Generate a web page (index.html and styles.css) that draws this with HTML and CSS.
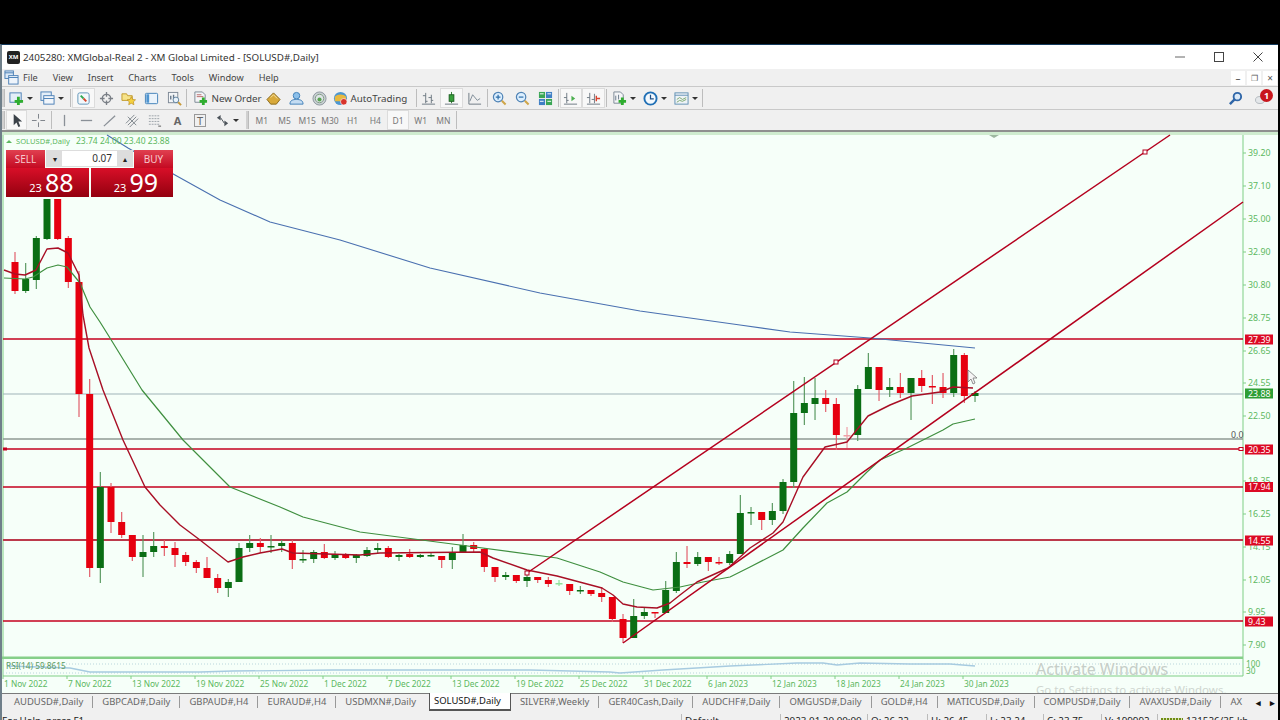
FILE: index.html
```html
<!DOCTYPE html>
<html lang="en">
<head>
  <meta charset="UTF-8">
  <title>2405280: XMGlobal-Real 2 - XM Global Limited - [SOLUSD#,Daily]</title>
  <link rel="stylesheet" href="styles.css">
</head>
<body>

<div class="window">

  <header class="titlebar">
    <span class="app-logo">XM</span>
    <span class="title-text">2405280: XMGlobal-Real 2 - XM Global Limited - [SOLUSD#,Daily]</span>
    <div class="win-buttons">
      <svg viewBox="0 0 12 12"><path d="M1 6h10" stroke="#666" fill="none"/></svg>
      <svg viewBox="0 0 12 12"><rect x="1.5" y="1.5" width="9" height="9" stroke="#444" fill="none"/></svg>
      <svg viewBox="0 0 12 12"><path d="M1.5 1.5l9 9M10.5 1.5l-9 9" stroke="#444" fill="none"/></svg>
    </div>
  </header>

  <nav class="menubar">
    <svg class="ic menu-icon" viewBox="0 0 16 16"><rect x="1" y="1" width="9" height="8" fill="#dbe8f6" stroke="#4a7fb5"/><rect x="5" y="6" width="10" height="9" fill="#eef4fb" stroke="#4a7fb5"/><path d="M1 3h9M5 8h10" stroke="#4a7fb5"/></svg>
    <a>File</a><a>View</a><a>Insert</a><a>Charts</a><a>Tools</a><a>Window</a><a>Help</a>
    <div class="mdi-buttons">
      <span>&#8211;</span><span class="restore">&#10064;</span><span>&#215;</span>
    </div>
  </nav>

  <div class="toolbar">
    <i class="grip"></i>
    <div class="tool w30">
      <svg class="ic" viewBox="0 0 16 16"><rect x="1" y="2" width="12" height="10" fill="#e4eef8" stroke="#4a7fb5"/><path d="M10 6v9M6 11h9" stroke="#2fae2f" stroke-width="3"/></svg><b class="caret"></b>
    </div>
    <div class="tool w33">
      <svg class="ic" viewBox="0 0 16 16"><rect x="1" y="1" width="11" height="9" fill="#e4eef8" stroke="#4a7fb5"/><rect x="4" y="5" width="11" height="9" fill="#f2f6fb" stroke="#4a7fb5"/><path d="M4 8h11" stroke="#4a7fb5"/></svg><b class="caret"></b>
    </div>
    <i class="sep"></i>
    <div class="tool boxed">
      <svg class="ic" viewBox="0 0 16 16"><rect x="2" y="2" width="12" height="12" rx="2" fill="#f2f8fb" stroke="#5f93b8"/><path d="M5 5l3 3" stroke="#2fa84f" stroke-width="2"/><path d="M8 8l3 3" stroke="#d6452b" stroke-width="2"/></svg>
    </div>
    <div class="tool">
      <svg class="ic" viewBox="0 0 16 16"><circle cx="8" cy="8" r="4.5" fill="none" stroke="#7a7f86" stroke-width="1.4"/><path d="M8 1v5M8 10v5M1 8h5M10 8h5" stroke="#7a7f86" stroke-width="1.4"/></svg>
    </div>
    <div class="tool">
      <svg class="ic" viewBox="0 0 16 16"><path d="M1 3h5l1 2h5v5H1z" fill="#f6e38a" stroke="#c19a2e"/><path d="M11 6l1.4 3 3.1.4-2.3 2.1.6 3.1-2.8-1.5-2.8 1.5.6-3.1-2.3-2.1 3.1-.4z" fill="#f4d03f" stroke="#b98a1e" stroke-width=".7"/></svg>
    </div>
    <div class="tool">
      <svg class="ic" viewBox="0 0 16 16"><rect x="1.5" y="2.5" width="13" height="11" rx="1" fill="#eaf3fb" stroke="#3f7fb8"/><rect x="2.5" y="3.5" width="3" height="9" fill="#4f95d0"/></svg>
    </div>
    <div class="tool">
      <svg class="ic" viewBox="0 0 16 16"><rect x="1.5" y="1.5" width="10" height="11" fill="#f3f5f7" stroke="#7b8794"/><path d="M4 9V5M7 9V4" stroke="#66788a" stroke-width="1.5"/><circle cx="9.5" cy="9.5" r="3" fill="#e8f2fa" stroke="#5d7f9c"/><path d="M12 12l3 3" stroke="#c79a3a" stroke-width="2"/></svg>
    </div>
    <i class="sep"></i>
    <div class="tool labeled w74">
      <svg class="ic" viewBox="0 0 16 16"><path d="M2 1h8l3 3v8H2z" fill="#f4f5f7" stroke="#7b8794"/><path d="M4 4h5M4 6h7" stroke="#a44" stroke-width=".8"/><path d="M11 7v8M7 11h8" stroke="#2fae2f" stroke-width="3"/></svg>
      <span>New Order</span>
    </div>
    <div class="tool">
      <svg class="ic" viewBox="0 0 16 16"><path d="M1 9l7-7 7 7-4 5H5z" fill="#d8a93a" stroke="#8a6a1d"/><path d="M5 7l3-3 4 4" fill="none" stroke="#f6e3a4"/></svg>
    </div>
    <div class="tool">
      <svg class="ic" viewBox="0 0 16 16"><circle cx="8" cy="5" r="3.5" fill="#8cc0ea" stroke="#3f7fb8"/><path d="M1 14c0-4 3-5 7-5s7 1 7 5z" fill="#c4dcf2" stroke="#3f7fb8"/></svg>
    </div>
    <div class="tool">
      <svg class="ic" viewBox="0 0 16 16"><circle cx="8" cy="8" r="7" fill="#c9cfd3" stroke="#8d979e"/><circle cx="8" cy="8" r="4.5" fill="#dfe5e8" stroke="#7d9a80"/><circle cx="8" cy="9" r="2.2" fill="#57a34f"/></svg>
    </div>
    <div class="tool labeled w84">
      <svg class="ic" viewBox="0 0 16 16"><circle cx="8" cy="8" r="7" fill="#4d97d1"/><path d="M2 6c3-3 9-3 12 0v5H2z" fill="#e8b93e"/><circle cx="11.5" cy="11.5" r="3.5" fill="#d8332b" stroke="#fff" stroke-width=".7"/></svg>
      <span>AutoTrading</span>
    </div>
    <i class="sep"></i>
    <div class="tool">
      <svg class="ic" viewBox="0 0 16 16"><path d="M5 2v11M2 5h3M5 11h2M11 4v9M8 7h3M11 10h2M1 14h14" stroke="#6b7680" fill="none"/></svg>
    </div>
    <div class="tool boxed">
      <svg class="ic" viewBox="0 0 16 16"><path d="M1 14h14" stroke="#6b7680"/><path d="M8 1v12" stroke="#2e7d32"/><rect x="5.5" y="4" width="5" height="7" fill="#36a03a" stroke="#1b5e20"/></svg>
    </div>
    <div class="tool">
      <svg class="ic" viewBox="0 0 16 16"><path d="M2 2v12h13" stroke="#6b7680" fill="none"/><path d="M3 11l3-7 5 6 3-2" stroke="#7c8a95" fill="none"/></svg>
    </div>
    <i class="sep"></i>
    <div class="tool">
      <svg class="ic" viewBox="0 0 16 16"><circle cx="6.5" cy="6.5" r="5" fill="#dcefff" stroke="#4f83b5" stroke-width="1.3"/><path d="M4 6.5h5M6.5 4v5" stroke="#2f6fa8" stroke-width="1.3"/><path d="M10.5 10.5l4 4" stroke="#cfa64a" stroke-width="2.2"/></svg>
    </div>
    <div class="tool">
      <svg class="ic" viewBox="0 0 16 16"><circle cx="6.5" cy="6.5" r="5" fill="#dcefff" stroke="#4f83b5" stroke-width="1.3"/><path d="M4 6.5h5" stroke="#2f6fa8" stroke-width="1.3"/><path d="M10.5 10.5l4 4" stroke="#cfa64a" stroke-width="2.2"/></svg>
    </div>
    <div class="tool">
      <svg class="ic" viewBox="0 0 16 16"><rect x="1" y="1" width="6.5" height="6.5" fill="#3aa655"/><rect x="8.5" y="1" width="6.5" height="6.5" fill="#3f7fc4"/><rect x="1" y="8.5" width="6.5" height="6.5" fill="#3f7fc4"/><rect x="8.5" y="8.5" width="6.5" height="6.5" fill="#3aa655"/><path d="M2 3h4M10 3h4M2 11h4M10 11h4" stroke="#fff"/></svg>
    </div>
    <i class="sep"></i>
    <div class="tool boxed">
      <svg class="ic" viewBox="0 0 16 16"><path d="M4 2v11M1 14h14M1 7h3M4 10h2" stroke="#6b7680" fill="none"/><path d="M9 5l4 3-4 3z" fill="#4caf50"/></svg>
    </div>
    <div class="tool boxed">
      <svg class="ic" viewBox="0 0 16 16"><path d="M4 2v11M9 3v10M1 14h14M1 7h3M6 9h3" stroke="#6b7680" fill="none"/><path d="M11 5v6M11 8h4" stroke="#d9432f" stroke-width="1.5"/></svg>
    </div>
    <i class="sep"></i>
    <div class="tool w31">
      <svg class="ic" viewBox="0 0 16 16"><path d="M2 1h7l3 3v9H2z" fill="#f4f5f7" stroke="#7b8794"/><path d="M4 5v5M7 4v5" stroke="#66788a"/><path d="M11 7v8M7 11h8" stroke="#2fae2f" stroke-width="3"/></svg><b class="caret"></b>
    </div>
    <div class="tool w31">
      <svg class="ic" viewBox="0 0 16 16"><circle cx="8" cy="8" r="6.5" fill="#f2f8fd" stroke="#1f6fb5" stroke-width="2"/><path d="M8 4v4.5h3.5" stroke="#1f4f85" fill="none" stroke-width="1.3"/></svg><b class="caret"></b>
    </div>
    <div class="tool w31">
      <svg class="ic" viewBox="0 0 16 16"><rect x="1" y="2" width="14" height="12" fill="#eef3f7" stroke="#5f8fb3"/><path d="M1 4.5h14" stroke="#5f8fb3"/><path d="M3 9l3-2 3 2 4-2M3 12l3-2 3 1 4-2" stroke="#7aa86d" fill="none"/></svg><b class="caret"></b>
    </div>
    <i class="sep"></i>
    <div class="toolbar-end">
      <svg class="ic" viewBox="0 0 16 16"><circle cx="10" cy="6" r="4" fill="#dbe9f7" stroke="#2f66a8" stroke-width="2"/><path d="M7 9l-5 5" stroke="#2f66a8" stroke-width="2.6"/></svg>
      <span class="alert-icon"><svg viewBox="0 0 18 16"><ellipse cx="5" cy="10" rx="4.5" ry="3.5" fill="#e4e7ea" stroke="#b5bbc0"/></svg><b>1</b></span>
    </div>
  </div>

  <div class="toolbar second">
    <i class="grip"></i>
    <div class="tool boxed narrow">
      <svg class="ic" viewBox="0 0 16 16"><path d="M5 1v12l3-3 2 5 2-1-2-5h4z" fill="#3b4249"/></svg>
    </div>
    <div class="tool">
      <svg class="ic" viewBox="0 0 16 16"><path d="M8 1v5M8 10v5M1 8h5M10 8h5" stroke="#7a7f86"/></svg>
    </div>
    <i class="sep"></i>
    <div class="tool"><svg class="ic" viewBox="0 0 16 16"><path d="M8 2v12" stroke="#8a9097" stroke-width="1.4"/></svg></div>
    <div class="tool"><svg class="ic" viewBox="0 0 16 16"><path d="M2 8h12" stroke="#8a9097" stroke-width="1.4"/></svg></div>
    <div class="tool"><svg class="ic" viewBox="0 0 16 16"><path d="M2 14L14 3" stroke="#8a9097" stroke-width="1.4"/></svg></div>
    <div class="tool"><svg class="ic" viewBox="0 0 16 16"><path d="M1 11L10 2M3 13l9-9M5 15l9-9M3 4l9 9" stroke="#7d848b"/></svg></div>
    <div class="tool"><svg class="ic" viewBox="0 0 16 16"><path d="M2 3h12M2 6h12M2 9h12M2 12h12" stroke="#9aa1a8" stroke-dasharray="2 1"/><path d="M12 14h3" stroke="#555"/></svg></div>
    <div class="tool"><span class="glyph">A</span></div>
    <div class="tool"><span class="glyph boxed-t">T</span></div>
    <div class="tool w31"><svg class="ic" viewBox="0 0 16 16"><path d="M2 5l4-3v6zM14 11l-4 3V8z" fill="#4b5259"/><path d="M6 5l4 6" stroke="#4b5259"/></svg><b class="caret"></b></div>
    <i class="grip gap"></i>
    <div class="tool period">M1</div>
    <div class="tool period">M5</div>
    <div class="tool period">M15</div>
    <div class="tool period">M30</div>
    <div class="tool period">H1</div>
    <div class="tool period">H4</div>
    <div class="tool period boxed">D1</div>
    <div class="tool period">W1</div>
    <div class="tool period">MN</div>
    <i class="sep"></i>
  </div>

  <main class="chart">
    <svg id="chartSvg" class="chart-svg" width="1276" height="561" viewBox="0 132 1276 561"></svg>

    <div class="trade-panel">
      <div class="trade-top">
        <span class="trade-btn">SELL</span>
        <div class="lots">
          <span class="spin">&#9662;</span>
          <span class="lots-value">0.07</span>
          <span class="spin">&#9652;</span>
        </div>
        <span class="trade-btn">BUY</span>
      </div>
      <div class="trade-prices">
        <div class="price"><small>23</small>88</div>
        <div class="price"><small>23</small>99</div>
      </div>
    </div>
  </main>

  <div class="tabs">
    <a>AUDUSD#,Daily</a>
    <a>GBPCAD#,Daily</a>
    <a>GBPAUD#,H4</a>
    <a>EURAUD#,H4</a>
    <a class="before-active">USDMXN#,Daily</a>
    <a class="active">SOLUSD#,Daily</a>
    <a>SILVER#,Weekly</a>
    <a>GER40Cash,Daily</a>
    <a>AUDCHF#,Daily</a>
    <a>OMGUSD#,Daily</a>
    <a>GOLD#,H4</a>
    <a>MATICUSD#,Daily</a>
    <a>COMPUSD#,Daily</a>
    <a>AVAXUSD#,Daily</a>
    <a class="cut">AX</a>
    <span class="tab-arrows"><b>&#9666;</b><b>&#9656;</b></span>
  </div>

  <footer class="status">
    <span>For Help, press F1</span>
    <span>Default</span>
    <span>2023.01.20 00:00</span>
    <span>O: 26.22</span>
    <span>H: 26.45</span>
    <span>L: 23.24</span>
    <span>C: 23.75</span>
    <span>V: 199992</span>
    <span class="conn"><i class="conn-bars"></i>131526/35 kb</span>
  </footer>

</div>

<script src="chart.js"></script>
</body>
</html>
```

FILE: styles.css
```css
:root {
  --panel: #f0f0f0;
  --text-main: #444;
  --chart-bg: #f6fff9;
}

html, body {
  margin: 0;
  height: 720px;
  overflow: hidden;
  background: #000;
}

body {
  font-family: 'Noto Sans', sans-serif;
  color: var(--text-main);
}

.window {
  margin: 44px 2px 0 0;
  border-top: 1px solid #12395c;
  border-left: 2px solid #6f7f8a;
  background: var(--panel);
  height: 675px;
  overflow: hidden;
}

.titlebar {
  height: 24px;
  background: #fff;
  display: flex;
  align-items: center;
  padding-left: 5px;
  color: #333;
  font-size: 9.8px;
}

.app-logo {
  width: 13px;
  height: 13px;
  border-radius: 2px;
  background: #222;
  color: #fff;
  font-size: 6px;
  font-weight: bold;
  line-height: 13px;
  text-align: center;
  margin-right: 3px;
}

.win-buttons {
  margin-left: auto;
  display: flex;
  gap: 27px;
  padding-right: 14px;
}

.win-buttons svg { width: 12px; height: 12px; }

.menubar {
  height: 17px;
  display: flex;
  align-items: center;
  font-size: 9.2px;
}

.menu-icon { margin: 0 4px 0 2px; }
.menubar a { margin-right: 15px; }

.mdi-buttons {
  margin-left: auto;
  display: flex;
  gap: 2px;
  padding-right: 1px;
}

.mdi-buttons span {
  width: 14px;
  height: 14px;
  background: #fff;
  color: #555;
  text-align: center;
  font-size: 10px;
  line-height: 14px;
}

.mdi-buttons .restore { font-size: 8px; }

.toolbar {
  height: 22px;
  display: flex;
  align-items: center;
  border-top: 1px solid #c9c9c9;
  font-size: 9.8px;
}

.toolbar.second {
  height: 20px;
  border-bottom: 2px solid #8f8f8f;
}

.grip {
  width: 2px;
  height: 18px;
  margin: 0 1px 0 0;
  background: #d0d0d0;
  border-right: 1px solid #bbb;
}

.second .grip.gap { margin: 0 2px 0 3px; }

.sep {
  width: 1px;
  height: 18px;
  margin: 0 1px;
  background: #bdbdbd;
  flex: none;
}

.tool {
  width: 22.7px;
  height: 20px;
  flex: none;
  display: flex;
  align-items: center;
  justify-content: center;
  box-sizing: border-box;
  gap: 3px;
}

.tool.w30 { width: 30px; }
.tool.w31 { width: 31px; }
.tool.w33 { width: 33px; padding-right: 2px; }
.tool.w74 { width: 74px; justify-content: flex-start; padding-left: 5px; }
.tool.w84 { width: 84px; justify-content: flex-start; padding-left: 2px; }
.tool.boxed { background: #f8f8f8; border: 1px solid #dcdcdc; }
.tool.narrow { width: 21px; }

.ic { width: 15px; height: 15px; flex: none; }

.caret {
  width: 0;
  height: 0;
  border-left: 3px solid transparent;
  border-right: 3px solid transparent;
  border-top: 3px solid #333;
}

.labeled span { white-space: nowrap; color: #444; }

.glyph { font-weight: bold; color: #666; font-size: 11px; }
.boxed-t { border: 1px solid #999; padding: 0 2px; line-height: 11px; font-weight: normal; }

.period { font-size: 8.5px; color: #777; }

.toolbar-end {
  margin-left: auto;
  display: flex;
  align-items: center;
  gap: 12px;
  padding-right: 5px;
}

.alert-icon {
  width: 18px;
  height: 16px;
  position: relative;
  display: block;
}

.alert-icon svg { width: 18px; height: 16px; }

.alert-icon b {
  position: absolute;
  right: 0;
  top: -1px;
  width: 13px;
  height: 13px;
  border-radius: 50%;
  background: #c8161d;
  color: #fff;
  font-size: 9px;
  line-height: 13px;
  text-align: center;
}

.chart {
  height: 561px;
  position: relative;
  overflow: hidden;
  background: var(--chart-bg);
}

.chart-svg { display: block; font-family: 'Noto Sans', sans-serif; }

.trade-panel {
  position: absolute;
  left: 4px;
  top: 18px;
  width: 167px;
  color: #fff;
}

.trade-top {
  display: flex;
  height: 18px;
  font-size: 10px;
}

.trade-btn {
  width: 39px;
  background: linear-gradient(#e04050, #c40a22);
  color: #f7c9cd;
  text-align: center;
  line-height: 18px;
  flex: none;
}

.lots {
  flex: 1;
  display: flex;
  align-items: stretch;
  background: #ddd;
  color: #333;
  padding: 1px;
  margin: 0 1px;
  box-sizing: border-box;
  height: 17px;
}

.spin {
  width: 15px;
  text-align: center;
  font-size: 8px;
  line-height: 15px;
  color: #222;
}

.lots-value {
  flex: 1;
  background: #fff;
  text-align: right;
  padding-right: 5px;
  line-height: 15px;
}

.trade-prices {
  display: flex;
  gap: 2px;
}

.price {
  flex: 1;
  height: 29px;
  background: linear-gradient(#d80f28, #93000f);
  font-size: 25px;
  line-height: 29px;
  text-align: right;
  padding-right: 15px;
}

.price small {
  font-size: 11px;
  margin-right: 3px;
}

.tabs {
  height: 17px;
  display: flex;
  align-items: center;
  background: var(--panel);
  border-top: 1px solid #7a7a7a;
  box-sizing: border-box;
  font-size: 9.45px;
  color: #666;
  padding-left: 3px;
  position: relative;
}

.tabs a {
  padding: 0 9px;
  border-right: 1px solid #999;
  line-height: 12px;
  white-space: nowrap;
}

.tabs .before-active { border-right: 0; padding-right: 13px; }

.tabs .active {
  color: #111;
  background: #fff;
  border: 1px solid #555;
  border-top: 0;
  border-bottom-width: 2px;
  padding-left: 4px;
  line-height: 16px;
  height: 16px;
  margin-top: -1px;
}

.tabs .cut { border: 0; }

.tab-arrows {
  position: absolute;
  right: 3px;
  display: flex;
  gap: 9px;
  font-size: 9px;
  color: #111;
}

.status {
  display: grid;
  grid-template-columns: 679px 99px 87px 60px 59px 57px 58px 56px 1fr;
  font-size: 9.8px;
  color: #222;
  padding-top: 4px;
  line-height: 14px;
}

.status span {
  border-left: 1px solid #bbb;
  padding-left: 3px;
  white-space: nowrap;
}

.status span:first-child { border-left: 0; padding-left: 0; }

.conn-bars {
  display: inline-block;
  width: 22px;
  height: 6px;
  margin-right: 3px;
  background: repeating-linear-gradient(90deg, #6e8c14 0 2px, #d8e0b0 2px 3px);
}
```

FILE: chart.js
```js
const svg = document.getElementById('chartSvg');
const NS = 'http://www.w3.org/2000/svg';

function add(tag, attrs, text) {
  const el = document.createElementNS(NS, tag);
  for (const key in attrs) el.setAttribute(key, attrs[key]);
  if (text) el.textContent = text;
  svg.appendChild(el);
  return el;
}

function line(points, color, width, extra) {
  add('polyline', Object.assign({
    points: points.map(p => p.join(',')).join(' '),
    fill: 'none', stroke: color, 'stroke-width': width, 'stroke-linejoin': 'round'
  }, extra || {}));
}

const GREEN = '#0a6e14', RED = '#e6000f';
const GREEN_LINE = '#3f8f3f', RED_LINE = '#a80f25', BLUE_LINE = '#4a70b0';
const AXIS = '#7fcf85', LABEL = '#5cb860';
const AXIS_X = 1241; // svg is shifted 2px by the window border

// [color, body top, body bottom, wick top, wick bottom] in pixels, one per day
const candles = [
  ['r',262,291,252,294],['g',279,291,263,293],['g',238,280,236,289],['g',199,239,199,240],
  ['r',199,239,199,240],['r',238,282,236,288],['r',282,394,271,417],['r',394,568,379,577],
  ['g',487,568,472,583],['r',487,522,483,533],['r',522,535,512,538],['r',535,557,535,561],
  ['g',552,557,535,577],['g',546,552,532,557],['r',546,548,540,556],['r',548,555,542,567],
  ['r',555,562,552,566],['r',562,568,560,573],['r',568,578,557,578],['r',578,588,574,593],
  ['g',582,588,579,597],['g',548,582,543,582],['g',543,548,535,552],['r',543,547,538,553],
  ['g',546,547,535,553],['g',543,546,540,552],['r',543,560,540,569],['g',559,560,550,563],
  ['g',552,559,550,563],['r',552,558,544,559],['g',554,558,551,560],['r',554,558,553,559],
  ['g',555,558,554,563],['g',550,556,547,557],['g',548,550,543,553],['r',548,557,546,558],
  ['g',555,557,554,561],['r',554,557,549,558],['g',555,557,554,558],['g',555,556,553,557],
  ['r',556,560,556,568],['g',553,560,547,569],['g',545,553,534,553],['r',545,549,542,552],
  ['r',549,567,548,572],['r',567,577,567,582],['g',575,577,572,580],['r',575,581,575,583],
  ['g',577,581,570,587],['r',577,580,577,583],['r',580,584,577,587],['l',583,584,580,586],
  ['r',584,591,584,595],['g',590,591,586,594],['r',590,594,590,596],['r',593,597,587,602],
  ['r',597,619,597,622],['r',619,638,614,643],['g',616,638,599,638],['g',612,616,607,619],
  ['r',612,613,612,618],['g',590,613,581,613],['g',562,591,552,593],['r',562,564,546,568],
  ['g',557,564,552,566],['r',557,562,557,571],['r',562,563,557,565],['g',554,563,551,565],
  ['g',513,554,495,554],['g',512,513,507,525],['r',512,520,512,530],['g',511,520,503,525],
  ['g',482,511,479,514],['g',413,482,381,488],['g',403,413,377,425],['g',398,404,378,420],
  ['r',398,404,390,412],['r',404,435,398,450],['p',435,436,427,448],['g',389,435,385,441],
  ['g',367,389,353,389],['r',367,390,367,401],['g',387,390,378,397],['r',387,393,373,398],
  ['g',378,393,378,420],['r',378,386,370,392],['r',386,387,375,404],['r',387,393,373,398],
  ['g',355,393,349,397],['r',355,396,353,403],['g',393,396,391,402]
];

const blueMa = [[107,135],[128,148],[175,175],[220,200],[270,222],[340,240],[430,268],[540,293],[640,311],[740,325],[790,332],[870,338],[975,348]];
const redMa = [[4,270],[15,274],[25,275],[36,270],[47,249],[58,248],[68,253],[79,275],[83,315],[89,348],[103,390],[123,440],[145,487],[160,505],[180,525],[200,540],[228,562],[243,557],[260,553],[282,549],[293,553],[360,555],[380,553],[480,552],[493,558],[527,570],[557,576],[602,588],[613,595],[623,604],[637,607],[657,608],[670,603],[680,595],[697,582],[728,568],[750,548],[773,533],[783,522],[803,477],[825,447],[847,442],[868,416],[890,405],[912,396],[940,392],[953,387],[973,388]];
const greenMa = [[4,278],[25,279],[33,277],[47,268],[58,265],[67,267],[80,283],[90,307],[100,322],[110,338],[142,390],[183,440],[230,487],[280,507],[303,517],[360,532],[460,545],[557,558],[600,572],[623,582],[653,590],[680,587],[703,582],[730,577],[750,567],[783,550],[803,528],[827,503],[847,492],[867,472],[880,460],[907,448],[943,430],[953,424],[975,419]];
const rsi = [[7,666],[70,668],[90,672],[133,672],[200,672],[233,671],[333,670],[530,670],[610,672],[620,673],[663,670],[730,666],[797,663],[823,663],[837,665],[860,663],[910,664],[950,664],[975,666]];

const levels = [
  [339, 1.5, '#c4001e'], [449, 1.5, '#c4001e'], [487, 1.5, '#c4001e'],
  [540, 2, '#bc3a4c'], [621, 1.5, '#c4001e']
];

const priceLabels = [
  ['39.20',153],['37.10',186],['35.00',219],['32.90',252],['30.80',285],['28.75',318],
  ['26.65',351],['24.55',383],['22.50',416],['18.35',481],['16.25',514],['14.15',547],
  ['12.05',580],['9.95',612],['7.90',645]
];
const priceBadges = [
  ['27.39',339.5,'#dc0a24'],['23.88',393.5,'#2e9e35'],['20.35',449.5,'#dc0a24'],
  ['17.94',487,'#dc0a24'],['14.55',540.5,'#dc0a24'],['9.43',621.5,'#dc0a24']
];
const dates = ['1 Nov 2022','7 Nov 2022','13 Nov 2022','19 Nov 2022','25 Nov 2022','1 Dec 2022','7 Dec 2022','13 Dec 2022','19 Dec 2022','25 Dec 2022','31 Dec 2022','6 Jan 2023','12 Jan 2023','18 Jan 2023','24 Jan 2023','30 Jan 2023'];

// frame
add('rect', { x: 0, y: 132, width: 1276, height: 3, fill: '#cfeccf' });
add('path', { d: `M1 135V676M${AXIS_X} 135V676`, stroke: AXIS, fill: 'none' });

// level lines
add('path', { d: `M1 394H${AXIS_X}`, stroke: '#9fb3b8', 'stroke-width': 1 });
add('path', { d: `M1 439H${AXIS_X}`, stroke: '#8f9a93', 'stroke-width': 1.5 });
levels.forEach(l => add('path', { d: `M1 ${l[0]}H${AXIS_X}`, stroke: l[2], 'stroke-width': l[1] }));

// candles
candles.forEach((c, i) => {
  const x = 13 + i * 10.667;
  const dark = { g: GREEN, r: RED, l: '#8fe09a', p: '#f0a0a8' }[c[0]];
  const wick = { g: '#5b9a62', r: '#e2606c', l: '#8fe09a', p: '#f0a0a8' }[c[0]];
  add('path', { d: `M${x} ${c[3]}V${c[4]}`, stroke: wick, 'stroke-width': 1.2 });
  add('rect', { x: x - 3.5, y: c[1], width: 7, height: Math.max(c[2] - c[1], 1.5), fill: dark });
});

const shift = pts => pts.map(p => [p[0] - 2, p[1]]);
line(shift(blueMa), BLUE_LINE, 1.1);
line(shift(greenMa), GREEN_LINE, 1.2);
line(shift(redMa), RED_LINE, 1.4);

// trend lines with their anchors
line([[525, 573], [1168, 135]], '#b4001e', 1.5);
line([[621, 643], [1241, 202]], '#b4001e', 1.5);
[[525, 573], [834, 362], [1143, 152]].forEach(p => add('rect', {
  x: p[0] - 2, y: p[1] - 2, width: 4, height: 4, fill: '#fff', stroke: '#b4001e', 'stroke-width': 1
}));
add('rect', { x: 1, y: 447.5, width: 4, height: 3, fill: '#c4001e' });
add('rect', { x: 1237, y: 447.5, width: 4, height: 3, fill: '#fff', stroke: '#c4001e' });

// chart shift marker and mouse pointer
add('path', { d: 'M987 135h10l-5 3z', fill: '#9db8a0' });
add('path', { d: 'M966 370v12l3-3 2 5 2-1-2-5h4z', fill: '#f5f5f5', stroke: '#777', 'stroke-width': .8 });

// header line
add('path', { d: 'M4 143l3-3 3 3z', fill: LABEL });
add('text', { x: 14, y: 144, fill: LABEL, 'font-size': 7.6 }, 'SOLUSD#,Daily');
add('text', { x: 74, y: 144, fill: LABEL, 'font-size': 8.5 }, '23.74 24.00 23.40 23.88');

// price scale
priceLabels.forEach(p => {
  add('path', { d: `M${AXIS_X} ${p[1]}h3`, stroke: AXIS });
  add('text', { x: AXIS_X + 5, y: p[1] + 3, fill: LABEL, 'font-size': 8.8 }, p[0]);
});
priceBadges.forEach(b => {
  add('rect', { x: AXIS_X + 2, y: b[1] - 5, width: 28, height: 10, fill: b[2] });
  add('text', { x: AXIS_X + 5, y: b[1] + 3, fill: '#fff', 'font-size': 8.8 }, b[0]);
});
add('text', { x: AXIS_X - 12, y: 438, fill: '#555', 'font-size': 8.8 }, '0.0');

// RSI window
add('rect', { x: 0, y: 656.5, width: AXIS_X, height: 2.5, fill: '#86cf8a' });
add('path', { d: `M1 676H${AXIS_X}`, stroke: AXIS });
add('path', { d: `M1 664H${AXIS_X}M1 673H${AXIS_X}`, stroke: '#b9d6dc', 'stroke-dasharray': '1 2' });
line(shift(rsi), '#a7cbe0', 1.3);
add('text', { x: 4, y: 669, fill: '#5a9a5e', 'font-size': 8.3 }, 'RSI(14) 59.8615');
add('text', { x: AXIS_X + 3, y: 667, fill: LABEL, 'font-size': 8.3 }, '100');
add('text', { x: AXIS_X + 3, y: 674, fill: LABEL, 'font-size': 8.3 }, '30');

// time scale
dates.forEach((d, i) => {
  const x = 1 + i * 64;
  add('path', { d: `M${x} 676v3`, stroke: AXIS });
  add('text', { x: x + 1, y: 687, fill: LABEL, 'font-size': 8.3 }, d);
});

// system watermark
add('text', { x: 1034, y: 675, fill: '#c6cec8', 'font-size': 16 }, 'Activate Windows');
add('text', { x: 1034, y: 694, fill: '#cfd6d0', 'font-size': 11.5 }, 'Go to Settings to activate Windows.');
```
